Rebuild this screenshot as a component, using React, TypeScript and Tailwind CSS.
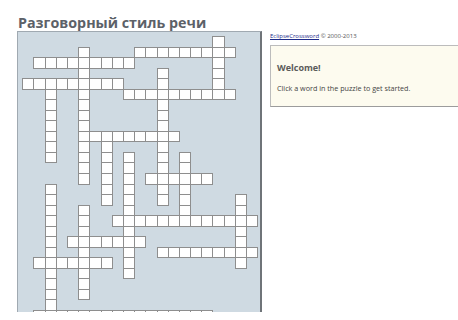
import React from 'react';

// [row, fromCol, toCol]
const across: [number, number, number][] = [
  [1, 10, 18],
  [2, 1, 9],
  [4, 0, 8],
  [5, 9, 18],
  [9, 5, 13],
  [13, 11, 16],
  [17, 8, 20],
  [19, 4, 10],
  [20, 12, 20],
  [21, 1, 7],
  [26, 1, 16],
];

// [col, fromRow, toRow]
const down: [number, number, number][] = [
  [17, 0, 5],
  [5, 1, 13],
  [12, 3, 15],
  [2, 4, 11],
  [7, 9, 15],
  [9, 11, 22],
  [14, 11, 17],
  [19, 15, 21],
  [5, 16, 24],
  [2, 14, 26],
];

const COLS = 21;
const ROWS = 27;

const filled = new Set<string>();
across.forEach(([r, a, b]) => {
  for (let c = a; c <= b; c++) filled.add(`${r}-${c}`);
});
down.forEach(([c, a, b]) => {
  for (let r = a; r <= b; r++) filled.add(`${r}-${c}`);
});

const Puzzle: React.FC = () => {
  const cells = [];
  for (let r = 0; r < ROWS; r++) {
    for (let c = 0; c < COLS; c++) {
      const key = `${r}-${c}`;
      cells.push(
        filled.has(key) ? (
          <div key={key} className="w-[12.2px] h-[11.53px] bg-white border border-[#8e8e8e]" />
        ) : (
          <div key={key} />
        )
      );
    }
  }
  return (
    <div className="w-[245px] h-[281px] overflow-hidden bg-[#cfdae2] border-l border-t border-[#a0a9b1] border-r-2 border-r-[#6f7479] pl-[4.3px] pt-[4.3px]">
      <div className="grid grid-cols-[repeat(21,11.2px)] grid-rows-[repeat(27,10.53px)]">{cells}</div>
    </div>
  );
};

export default function App() {
  return (
    <div className="w-[458px] h-[320px] overflow-hidden bg-white flex" style={{ fontFamily: '"Open Sans", Arial, sans-serif' }}>
      <div className="pl-[17px] pt-[13.5px] flex flex-col">
        <h1 className="text-[14.3px] leading-[17.5px] font-bold text-[#5c6168] pl-[1px]">Разговорный стиль речи</h1>
        <Puzzle />
      </div>
      <div className="ml-[8px] pt-[32px] flex-1 min-w-0">
        <p className="text-[6px] leading-[9px] text-[#555]">
          <a href="#" className="text-[#1d2b8a] underline">EclipseCrossword</a> © 2000-2013
        </p>
        <div className="mt-[4px] w-[220px] h-[62px] bg-[#fdfbef] border border-[#bcbcbc] border-b-[#9c9c9c] pl-[6px] pt-[16px]">
          <p className="text-[9px] leading-[12px] font-bold text-[#5b5b5b]">Welcome!</p>
          <p className="mt-[9px] text-[7.2px] leading-[10px] text-[#444]">Click a word in the puzzle to get started.</p>
        </div>
      </div>
    </div>
  );
}
